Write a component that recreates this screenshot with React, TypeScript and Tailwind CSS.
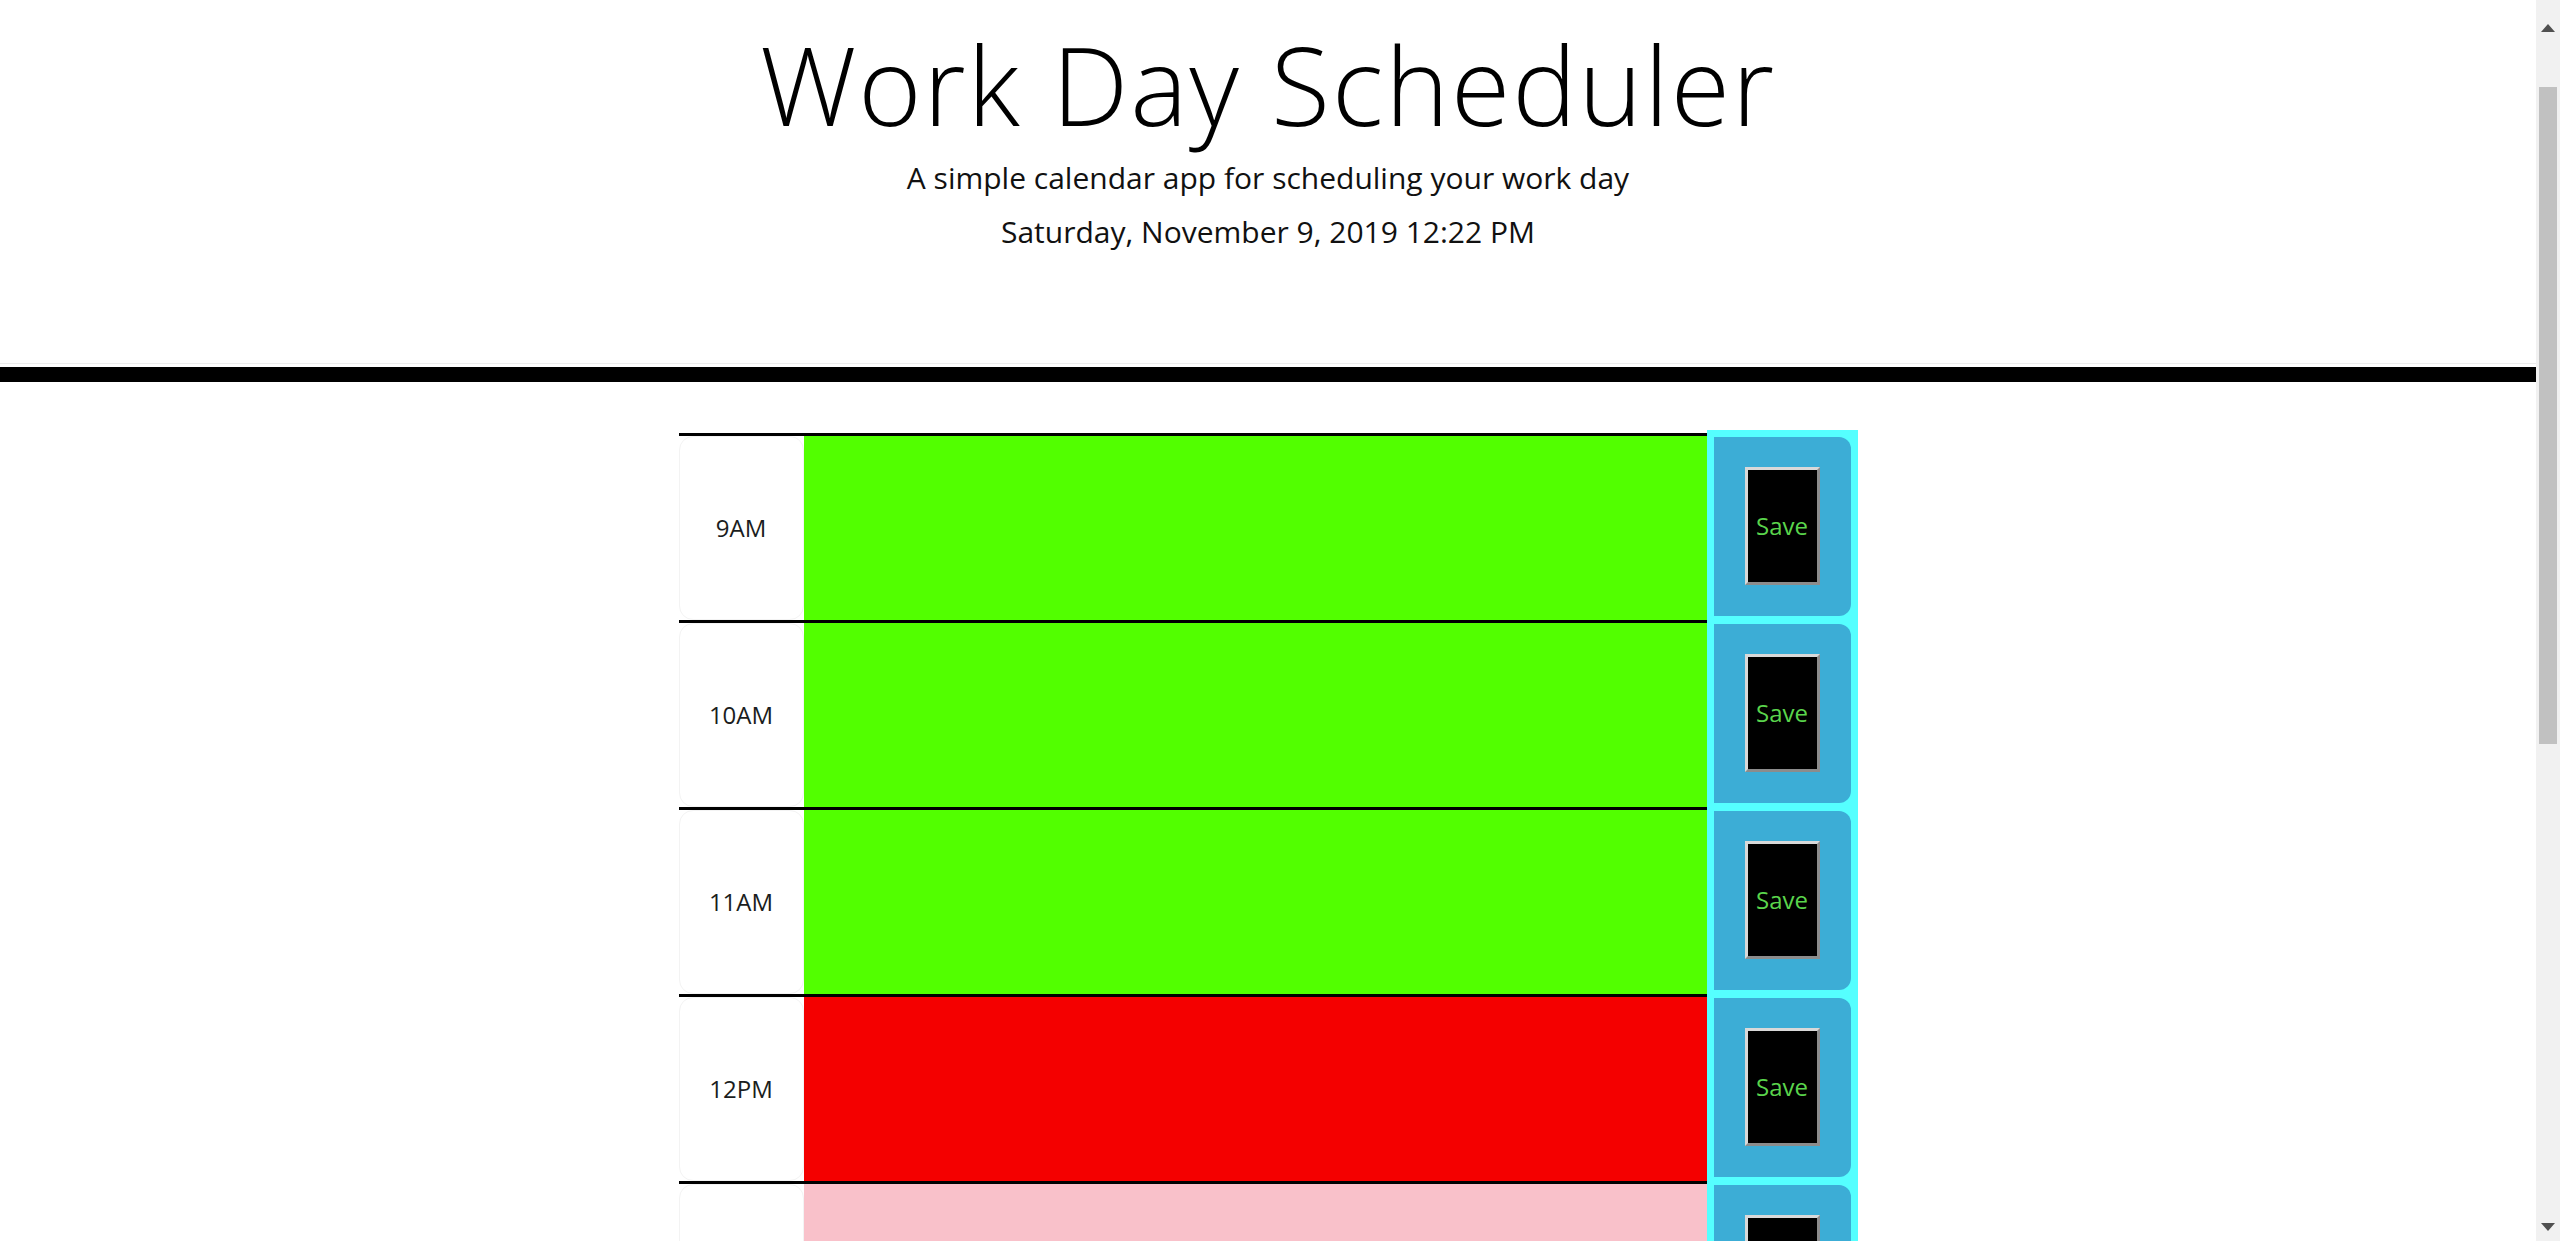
import React from "react";

type Slot = { label: string; tone: "past" | "present" | "future" };

const slots: Slot[] = [
  { label: "9AM", tone: "past" },
  { label: "10AM", tone: "past" },
  { label: "11AM", tone: "past" },
  { label: "12PM", tone: "present" },
  { label: "1PM", tone: "future" },
  { label: "2PM", tone: "future" },
  { label: "3PM", tone: "future" },
  { label: "4PM", tone: "future" },
  { label: "5PM", tone: "future" },
];

const toneClass = {
  past: "bg-[#52ff00]",
  present: "bg-[#f40000]",
  future: "bg-[#f9c1ca]",
};

function HourRow({ slot }: { slot: Slot }) {
  return (
    <div className="flex h-[187px]">
      <div className="flex w-[1028px] border-t-[3px] border-black">
        <div className="flex w-[125px] items-center justify-center rounded-[14px] border border-[#f3f3f3] text-[24px] text-[#1a1d20]">
          {slot.label}
        </div>
        <textarea className={`flex-1 resize-none border-0 outline-none ${toneClass[slot.tone]}`} />
      </div>
      <div className="-mt-[3px] h-[187px] w-[151px] bg-[#55ffff] pb-[1px] pl-[7px] pr-[7px] pt-[7px]">
        <div className="flex h-full items-center justify-center rounded-r-[12px] bg-[#3cadd6]">
          <button className="flex h-[118px] w-[75px] items-center justify-center border-[3px] border-b-[#8c8c8c] border-l-[#d9d9d9] border-r-[#8c8c8c] border-t-[#d9d9d9] bg-black text-[24px] text-[#5ad44c]">
            Save
          </button>
        </div>
      </div>
    </div>
  );
}

function Scrollbar() {
  return (
    <div className="flex h-full w-[24px] flex-col bg-[#f1f1f1]">
      <div className="flex h-[87px] justify-center pt-[24px]">
        <svg width="14" height="8" viewBox="0 0 14 8">
          <polygon points="7,0 14,8 0,8" fill="#505050" />
        </svg>
      </div>
      <div className="mx-[3px] h-[657px] bg-[#c1c1c1]" />
      <div className="flex flex-1 items-end justify-center pb-[10px]">
        <svg width="14" height="8" viewBox="0 0 14 8">
          <polygon points="0,0 14,0 7,8" fill="#505050" />
        </svg>
      </div>
    </div>
  );
}

export default function App() {
  return (
    <div className="flex h-screen w-full overflow-hidden bg-white font-['Open_Sans',sans-serif]">
      <div className="flex-1 overflow-y-auto [scrollbar-width:none]">
        <header className="flex flex-col items-center pt-[20px] text-[#111]">
          <h1 className="text-[108px] font-light leading-[1.2] tracking-[2px] text-black">Work Day Scheduler</h1>
          <p className="mt-[5px] text-[30px] leading-[45px]">A simple calendar app for scheduling your work day</p>
          <p className="mt-[9px] text-[30px] leading-[45px]">Saturday, November 9, 2019 12:22 PM</p>
        </header>
        <div className="mt-[109px] h-px bg-[#ececec]" />
        <div className="mt-[3px] h-[15px] bg-black" />
        <div className="mx-auto mt-[51px] w-[1179px] pb-[60px]">
          {slots.map((s) => (
            <HourRow key={s.label} slot={s} />
          ))}
        </div>
      </div>
      <Scrollbar />
    </div>
  );
}
